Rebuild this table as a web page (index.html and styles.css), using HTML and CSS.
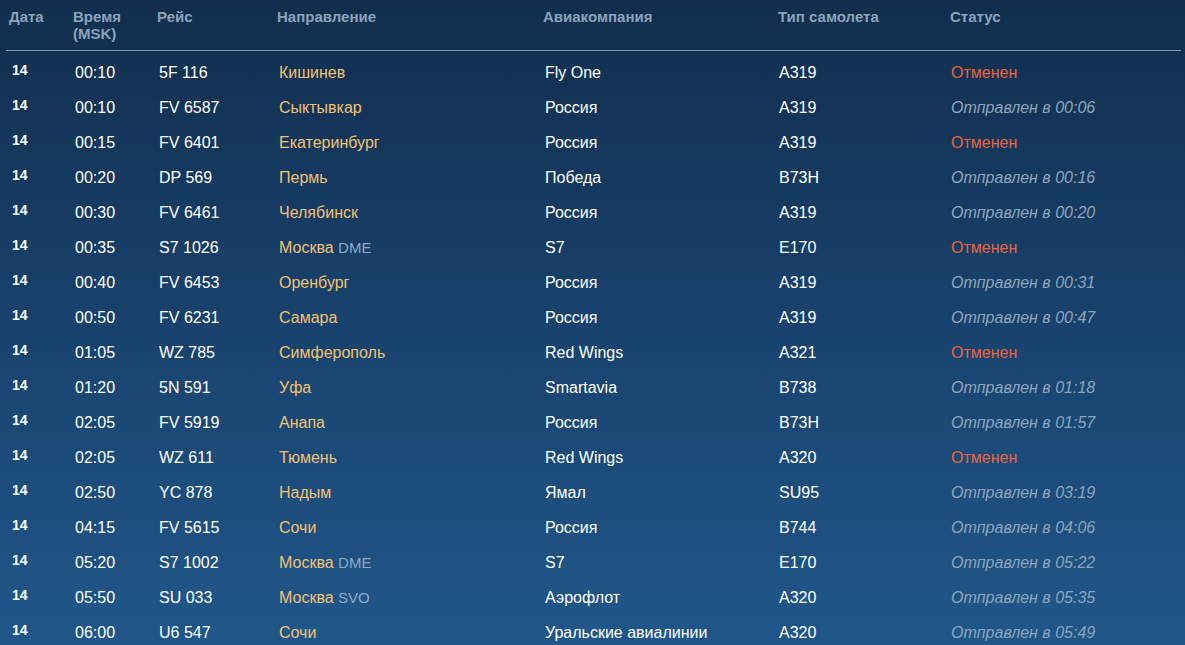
FILE: index.html
```html
<!DOCTYPE html>
<html lang="ru">
<head>
    <meta charset="UTF-8">
    <meta name="viewport" content="width=device-width, initial-scale=1.0">
    <title>Табло вылета</title>
    <link rel="stylesheet" href="styles.css">
</head>
<body>

    <div class="board">
        <table class="flights">
            <thead>
                <tr>
                    <th class="col-date">Дата</th>
                    <th class="col-time">Время<br>(MSK)</th>
                    <th class="col-flight">Рейс</th>
                    <th class="col-dest">Направление</th>
                    <th class="col-airline">Авиакомпания</th>
                    <th class="col-plane">Тип самолета</th>
                    <th class="col-status">Статус</th>
                </tr>
            </thead>
            <tbody>
                <tr><td class="date">14</td><td>00:10</td><td>5F 116</td><td class="dest">Кишинев</td><td>Fly One</td><td>A319</td><td class="status cancelled">Отменен</td></tr>
                <tr><td class="date">14</td><td>00:10</td><td>FV 6587</td><td class="dest">Сыктывкар</td><td>Россия</td><td>A319</td><td class="status departed">Отправлен в 00:06</td></tr>
                <tr><td class="date">14</td><td>00:15</td><td>FV 6401</td><td class="dest">Екатеринбург</td><td>Россия</td><td>A319</td><td class="status cancelled">Отменен</td></tr>
                <tr><td class="date">14</td><td>00:20</td><td>DP 569</td><td class="dest">Пермь</td><td>Победа</td><td>B73H</td><td class="status departed">Отправлен в 00:16</td></tr>
                <tr><td class="date">14</td><td>00:30</td><td>FV 6461</td><td class="dest">Челябинск</td><td>Россия</td><td>A319</td><td class="status departed">Отправлен в 00:20</td></tr>
                <tr><td class="date">14</td><td>00:35</td><td>S7 1026</td><td class="dest">Москва <span class="airport">DME</span></td><td>S7</td><td>E170</td><td class="status cancelled">Отменен</td></tr>
                <tr><td class="date">14</td><td>00:40</td><td>FV 6453</td><td class="dest">Оренбург</td><td>Россия</td><td>A319</td><td class="status departed">Отправлен в 00:31</td></tr>
                <tr><td class="date">14</td><td>00:50</td><td>FV 6231</td><td class="dest">Самара</td><td>Россия</td><td>A319</td><td class="status departed">Отправлен в 00:47</td></tr>
                <tr><td class="date">14</td><td>01:05</td><td>WZ 785</td><td class="dest">Симферополь</td><td>Red Wings</td><td>A321</td><td class="status cancelled">Отменен</td></tr>
                <tr><td class="date">14</td><td>01:20</td><td>5N 591</td><td class="dest">Уфа</td><td>Smartavia</td><td>B738</td><td class="status departed">Отправлен в 01:18</td></tr>
                <tr><td class="date">14</td><td>02:05</td><td>FV 5919</td><td class="dest">Анапа</td><td>Россия</td><td>B73H</td><td class="status departed">Отправлен в 01:57</td></tr>
                <tr><td class="date">14</td><td>02:05</td><td>WZ 611</td><td class="dest">Тюмень</td><td>Red Wings</td><td>A320</td><td class="status cancelled">Отменен</td></tr>
                <tr><td class="date">14</td><td>02:50</td><td>YC 878</td><td class="dest">Надым</td><td>Ямал</td><td>SU95</td><td class="status departed">Отправлен в 03:19</td></tr>
                <tr><td class="date">14</td><td>04:15</td><td>FV 5615</td><td class="dest">Сочи</td><td>Россия</td><td>B744</td><td class="status departed">Отправлен в 04:06</td></tr>
                <tr><td class="date">14</td><td>05:20</td><td>S7 1002</td><td class="dest">Москва <span class="airport">DME</span></td><td>S7</td><td>E170</td><td class="status departed">Отправлен в 05:22</td></tr>
                <tr><td class="date">14</td><td>05:50</td><td>SU 033</td><td class="dest">Москва <span class="airport">SVO</span></td><td>Аэрофлот</td><td>A320</td><td class="status departed">Отправлен в 05:35</td></tr>
                <tr><td class="date">14</td><td>06:00</td><td>U6 547</td><td class="dest">Сочи</td><td>Уральские авиалинии</td><td>A320</td><td class="status departed">Отправлен в 05:49</td></tr>
            </tbody>
        </table>
    </div>

</body>
</html>
```

FILE: styles.css
```css
/* Reset and Base Styles */
* {
    margin: 0;
    padding: 0;
    box-sizing: border-box;
}

html, body {
    height: 100%;
}

body {
    background: linear-gradient(to bottom, #112e4d 0%, #17406a 45%, #20578a 100%);
    font-family: "Liberation Sans", Arial, sans-serif;
    color: #ffffff;
    overflow: hidden;
}

.board {
    padding: 0 4px 0 6px;
}

.flights {
    width: 100%;
    border-collapse: collapse;
    table-layout: fixed;
}

/* Header */
.flights th {
    text-align: left;
    vertical-align: top;
    font-size: 15px;
    line-height: 17px;
    font-weight: bold;
    color: #8ba3bc;
    padding: 8px 0 8px 4px;
    border-bottom: 1px solid #7f98b2;
}

.flights th.col-date {
    padding-left: 3px;
}

.flights th.col-plane,
.flights th.col-status {
    padding-left: 5px;
}

.col-date    { width: 63px; }
.col-time    { width: 84px; }
.col-flight  { width: 120px; }
.col-dest    { width: 266px; }
.col-airline { width: 234px; }
.col-plane   { width: 172px; }

/* Rows */
.flights td {
    vertical-align: top;
    height: 35px;
    padding: 13px 0 0 6px;
    font-size: 16px;
    line-height: 18px;
    white-space: nowrap;
}

.flights td.date {
    font-size: 14px;
    line-height: 16px;
    font-weight: bold;
    padding-top: 11px;
}

.dest {
    color: #f1c173;
}

.airport {
    font-size: 15px;
    color: #8fa9c6;
}

.status.cancelled {
    color: #e8643f;
}

.status.departed {
    color: #8ea4ba;
    font-style: italic;
}
```
